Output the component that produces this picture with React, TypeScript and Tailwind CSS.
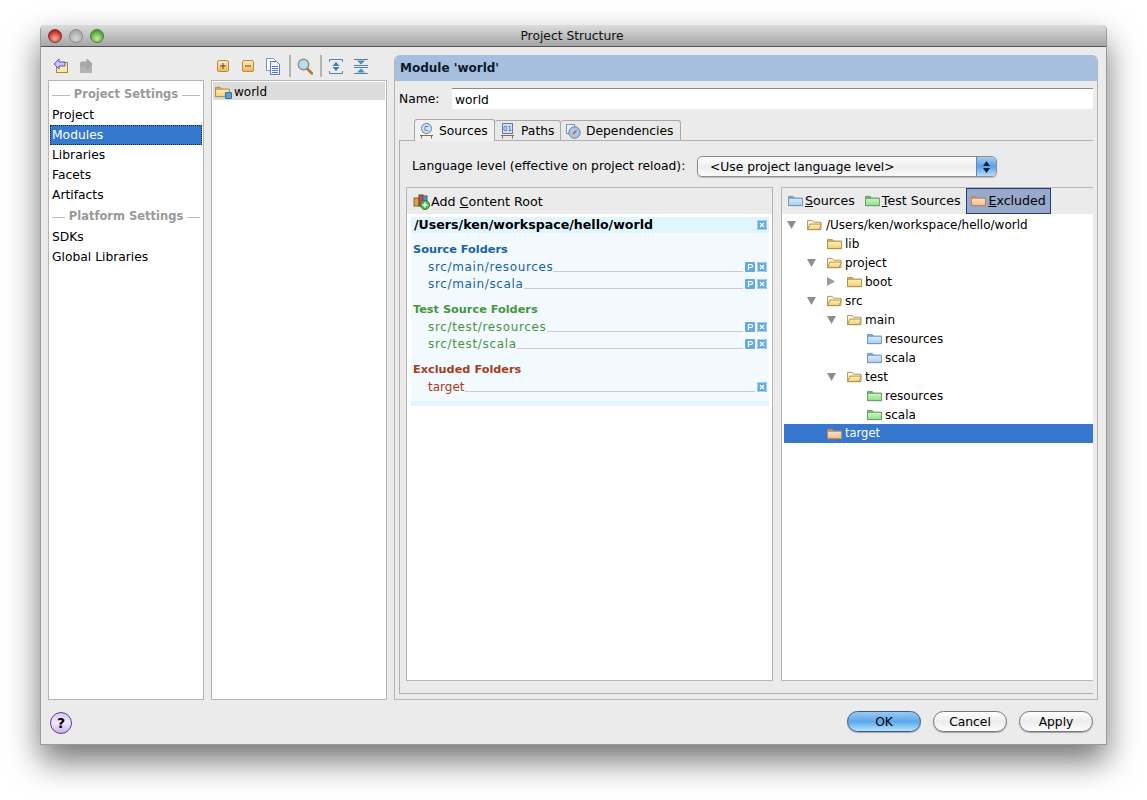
import React from "react";

const font = { sans: "font-['DejaVu_Sans',sans-serif]" };

const folderColors = {
  yellow: { tab: "#d9b65c", top: "#fdf0b8", bottom: "#f5cf6a", line: "#a98f4e" },
  blue: { tab: "#7fa9cf", top: "#d8ebfb", bottom: "#a9cdee", line: "#6f96bb" },
  green: { tab: "#6fb56f", top: "#cdf5c5", bottom: "#8fe08a", line: "#669c66" },
  orange: { tab: "#cf9a6d", top: "#fde3c8", bottom: "#f7b98a", line: "#b5865f" },
};

type FolderColor = keyof typeof folderColors;

const Folder = ({ color = "yellow", open = false }: { color?: FolderColor; open?: boolean }) => {
  const c = folderColors[color];
  const id = `f-${color}-${open ? "o" : "c"}`;
  return (
    <svg width="15" height="12" viewBox="0 0 16 13" className="shrink-0">
      <defs>
        <linearGradient id={id} x1="0" y1="0" x2="0" y2="1">
          <stop offset="0" stopColor={c.top} />
          <stop offset="1" stopColor={c.bottom} />
        </linearGradient>
      </defs>
      <path d="M.5 11.5V1.5h5l1.5 2h8v8z" fill={open ? "#fff7d8" : c.tab} stroke={c.line} />
      {open ? (
        <path d="M.5 11.5l2.5-6h12.5l-2.5 6z" fill={`url(#${id})`} stroke={c.line} />
      ) : (
        <rect x=".5" y="3.5" width="15" height="8" fill={`url(#${id})`} stroke={c.line} />
      )}
    </svg>
  );
};

const Light = ({ from, to, line }: { from: string; to: string; line: string }) => (
  <span
    className="w-[14px] h-[14px] rounded-full border"
    style={{ background: `radial-gradient(circle at 50% 70%, ${to}, ${from} 75%)`, borderColor: line }}
  />
);

const ToolbarIcons = () => (
  <div className="h-[28px] flex items-center pl-[5px]">
    <svg width="16" height="16" viewBox="0 0 16 16">
      <rect x="3.5" y="4.5" width="11" height="10" fill="#fbe9a6" stroke="#a88a44" />
      <path d="M1 6l5-5v3h6v4H6v3z" fill="#c9c5f5" stroke="#5a52c8" />
    </svg>
    <svg width="16" height="16" viewBox="0 0 16 16" className="ml-[9px]">
      <rect x="2" y="5" width="12" height="10" fill="#b3b3b3" />
      <path d="M14 6L9 1v3H3v4h6v3z" fill="#a8a8a8" stroke="#a0a0a0" />
    </svg>
  </div>
);

const SquareBtn = ({ plus }: { plus?: boolean }) => (
  <svg width="12" height="12" viewBox="0 0 12 12">
    <defs>
      <linearGradient id="sq" x1="0" y1="0" x2="0" y2="1">
        <stop offset="0" stopColor="#fdeec0" />
        <stop offset="1" stopColor="#f0b45c" />
      </linearGradient>
    </defs>
    <rect x=".5" y=".5" width="11" height="11" rx="1.5" fill="url(#sq)" stroke="#c08a3c" />
    <path d="M3 6h6" stroke="#5c4a20" />
    {plus && <path d="M6 3v6" stroke="#5c4a20" />}
  </svg>
);

const MiddleToolbar = () => (
  <div className="h-[28px] flex items-center pl-[6px]">
    <SquareBtn plus />
    <span className="ml-[13px] flex">
      <SquareBtn />
    </span>
    <svg width="15" height="17" viewBox="0 0 15 17" className="ml-[12px]">
      <path d="M.5.5h7l2 2v10h-9z" fill="#fff" stroke="#7f93c4" />
      <path d="M4.5 3.5h6l3 3v10h-9z" fill="#eef3ff" stroke="#5f78b4" />
      <path d="M6 8.5h6M6 10.5h6M6 12.5h6M6 14.5h6" stroke="#5f78b4" />
    </svg>
    <span className="w-[2px] h-[22px] bg-[#b4b4b4] ml-[8px]" />
    <svg width="16" height="17" viewBox="0 0 16 17" className="ml-[6px]">
      <path d="M10 10.5l5 5" stroke="#b07a30" strokeWidth="2.5" strokeLinecap="round" />
      <circle cx="6.5" cy="6.5" r="5.2" fill="#b8dcf4" stroke="#8f8f80" strokeWidth="1.4" />
    </svg>
    <span className="w-[2px] h-[22px] bg-[#b4b4b4] ml-[7px]" />
    <svg width="14" height="15" viewBox="0 0 14 15" className="ml-[7px]">
      <path d="M.5 3V.5h13V3M.5 12v2.500h13V12" fill="none" stroke="#5f7f9f" />
      <path d="M7 3l3.500 4h-7zM7 12L3.500 8h7z" fill="#3f7fb8" />
    </svg>
    <svg width="14" height="15" viewBox="0 0 14 15" className="ml-[11px]">
      <path d="M0 .5h14M0 6.500h14M0 8.500h14M0 14.500h14" fill="none" stroke="#5f7f9f" />
      <path d="M3 1.500h8L7 5.500zM3 13.500h8L7 9.500z" fill="#3f8fc8" />
    </svg>
  </div>
);

const SectionTitle = ({ children }: { children: React.ReactNode }) => (
  <div className="h-[22px] flex items-center gap-[4px] px-[3px] pt-[2px] text-[#999999] font-bold text-[11.5px]">
    <span className="flex-1 h-px bg-[#bdbdbd]" />
    <span>{children}</span>
    <span className="flex-1 h-px bg-[#bdbdbd]" />
  </div>
);

const NavItem = ({ label, active }: { label: string; active?: boolean }) => (
  <div
    className={
      active
        ? "h-[20px] mx-px flex items-center pl-px bg-[#3678cd] text-white border border-dotted border-[#0b2a55]"
        : "h-[20px] mx-px flex items-center pl-[2px] text-black"
    }
  >
    {label}
  </div>
);

const Sidebar = () => (
  <div className="w-[156px] flex flex-col shrink-0">
    <ToolbarIcons />
    <div className="flex-1 bg-white border border-[#b5b5b5] pt-[2px]">
      <SectionTitle>Project Settings</SectionTitle>
      <NavItem label="Project" />
      <NavItem label="Modules" active />
      <NavItem label="Libraries" />
      <NavItem label="Facets" />
      <NavItem label="Artifacts" />
      <SectionTitle>Platform Settings</SectionTitle>
      <NavItem label="SDKs" />
      <NavItem label="Global Libraries" />
    </div>
  </div>
);

const ModuleTree = () => (
  <div className="w-[176px] flex flex-col shrink-0 ml-[7px]">
    <MiddleToolbar />
    <div className="flex-1 bg-white border border-[#b5b5b5] pt-px px-px">
      <div className="h-[18px] bg-[#dcdcdc] flex items-center pl-[2px] gap-[3px] pt-px text-[12px]">
        <span className="relative flex">
          <Folder />
          <span className="absolute right-[-2px] bottom-[-1px] w-[7px] h-[7px] bg-[#5aa0d8] border border-[#2f6ea8] rounded-[1px]" />
        </span>
        <span className="ml-px">world</span>
      </div>
    </div>
  </div>
);

const TabIcon = ({ glyph }: { glyph: string }) => (
  <svg width="15" height="16" viewBox="0 0 15 16" className="shrink-0">
    <rect x="2.500" y=".5" width="10" height="10" rx={glyph === "C" ? 5 : 0} fill="#cfe0f5" stroke="#5d7fae" />
    <text x="7.500" y="8" fontSize="7" textAnchor="middle" fill="#335c8f">
      {glyph}
    </text>
    <path d="M1 12.500h13M2.500 12.500v3M12.500 12.500v3" stroke="#8a6a3e" fill="none" />
  </svg>
);

const Compass = () => (
  <svg width="15" height="15" viewBox="0 0 15 15" className="shrink-0">
    <rect x=".5" y=".5" width="8" height="9" fill="#eef3fb" stroke="#7e93b4" />
    <circle cx="8.500" cy="8.500" r="5.700" fill="#a9c8e8" stroke="#5d7fae" />
    <path d="M6 11l2-3.500L11 6 9.500 9z" fill="#d8533a" />
  </svg>
);

const Tabs = () => (
  <div className="flex h-[22px] ml-[15px] items-end">
    <div className="relative z-10 w-[81px] h-[22px] mb-[-1px] pt-px bg-[#f1f1f1] border border-b-0 border-[#a8a8a8] rounded-t-[3px] flex items-center pl-[4px] gap-[5px]">
      <TabIcon glyph="C" />
      <span>Sources</span>
    </div>
    <div className="w-[66px] h-[20px] pt-px bg-[#e9e9e9] border border-l-0 border-b-0 border-[#a8a8a8] rounded-t-[3px] flex items-center pl-[5px] gap-[6px]">
      <TabIcon glyph="01" />
      <span>Paths</span>
    </div>
    <div className="w-[120px] h-[20px] pt-px bg-[#e9e9e9] border border-l-0 border-b-0 border-[#a8a8a8] rounded-t-[3px] flex items-center pl-[5px] gap-[5px]">
      <Compass />
      <span>Dependencies</span>
    </div>
  </div>
);

const SelectBox = () => (
  <div className="w-[300px] h-[21px] rounded-[5px] border border-[#8e8e8e] flex overflow-hidden bg-gradient-to-b from-[#ffffff] via-[#eeeeee] to-[#fafafa] shadow-[0_1px_1px_rgba(0,0,0,0.2)]">
    <span className="flex-1 pl-[12px] leading-[20px]">&lt;Use project language level&gt;</span>
    <span className="w-[20px] flex flex-col items-center justify-center gap-[2px] bg-gradient-to-b from-[#a9cdf2] via-[#5f9fe6] to-[#b9dcf8] border-l border-[#5f86b4]">
      <svg width="7" height="5" viewBox="0 0 7 5">
        <path d="M3.500 0L7 5H0z" fill="#10233c" />
      </svg>
      <svg width="7" height="5" viewBox="0 0 7 5">
        <path d="M3.500 5L7 0H0z" fill="#10233c" />
      </svg>
    </span>
  </div>
);

const XBtn = () => (
  <svg width="10" height="10" viewBox="0 0 10 10" className="shrink-0">
    <rect width="10" height="10" rx="1" fill="#63a9e6" />
    <rect x=".5" y=".5" width="9" height="9" rx="1" fill="none" stroke="#a9d2f0" />
    <path d="M3 3l4 4M7 3l-4 4" stroke="#fff" strokeWidth="1.300" />
  </svg>
);

const PBtn = () => (
  <svg width="10" height="10" viewBox="0 0 10 10" className="shrink-0">
    <rect width="10" height="10" rx="1" fill="#63a9e6" />
    <path d="M3.500 8V2.500h2.500a1.400 1.400 0 0 1 0 3H3.500" fill="none" stroke="#fff" strokeWidth="1.200" />
  </svg>
);

const PathRow = ({ label, color, prop }: { label: string; color: string; prop?: boolean }) => (
  <div className="h-[17px] flex items-center pl-[17px] pr-[2px] text-[12px]" style={{ color }}>
    <span className={prop ? "tracking-[0.65px]" : ""}>{label}</span>
    <span className="flex-1 h-[10px] border-b border-[#c9cdd0] self-start mr-[2px] mt-[4px]" />
    {prop && <PBtn />}
    {prop && <span className="w-[2px]" />}
    <XBtn />
  </div>
);

const FolderGroup = ({ title, color, items, prop, mt }: { title: string; color: string; items: string[]; prop?: boolean; mt: string }) => (
  <div className={mt}>
    <div className="h-[17px] flex items-center pl-[2px] pt-[2px] font-bold text-[11.3px]" style={{ color }}>
      {title}
    </div>
    {items.map((item) => (
      <PathRow key={item} label={item} color={color} prop={prop} />
    ))}
  </div>
);

const ContentRoots = () => (
  <div className="w-[367px] bg-white border border-[#b5b5b5] flex flex-col shrink-0">
    <div className="h-[26px] bg-[#ebebeb] flex items-center pl-[6px] gap-[1px]">
      <svg width="17" height="17" viewBox="0 0 17 17" className="shrink-0">
        <rect x="1" y="5" width="5" height="8" fill="#d8a24a" stroke="#8a6a30" />
        <rect x="6" y="2" width="4" height="11" fill="#c8503c" stroke="#7a3a2c" />
        <rect x="10" y="3" width="4" height="9" fill="#5a8ec8" stroke="#3a5f8c" />
        <circle cx="12" cy="12" r="4.500" fill="#58b858" stroke="#2f7f2f" />
        <path d="M9.500 12h5M12 9.500v5" stroke="#fff" strokeWidth="1.400" />
      </svg>
      <span className="text-[12.7px] pt-px">
        Add <span className="underline">C</span>ontent Root
      </span>
    </div>
    <div className="ml-[4px] mr-[3px] mt-[3px] h-[189px] bg-[#f2faff] flex flex-col">
      <div className="h-[16px] bg-[#e1f5fe] flex items-center pl-[3px] pr-[2px] font-bold text-[12.6px] justify-between">
        <span className="pt-px">/Users/ken/workspace/hello/world</span>
        <XBtn />
      </div>
      <FolderGroup mt="mt-[8px]" title="Source Folders" color="#1a5fa8" items={["src/main/resources", "src/main/scala"]} prop />
      <FolderGroup mt="mt-[9px]" title="Test Source Folders" color="#4a9440" items={["src/test/resources", "src/test/scala"]} prop />
      <FolderGroup mt="mt-[9px]" title="Excluded Folders" color="#a83c20" items={["target"]} />
      <div className="flex-1" />
      <div className="h-[5px] bg-[#e1f5fe]" />
    </div>
  </div>
);

type Node = { label: string; depth: number; color?: FolderColor; arrow?: "down" | "right"; selected?: boolean };

const nodes: Node[] = [
  { label: "/Users/ken/workspace/hello/world", depth: 0, arrow: "down" },
  { label: "lib", depth: 1 },
  { label: "project", depth: 1, arrow: "down" },
  { label: "boot", depth: 2, arrow: "right" },
  { label: "src", depth: 1, arrow: "down" },
  { label: "main", depth: 2, arrow: "down" },
  { label: "resources", depth: 3, color: "blue" },
  { label: "scala", depth: 3, color: "blue" },
  { label: "test", depth: 2, arrow: "down" },
  { label: "resources", depth: 3, color: "green" },
  { label: "scala", depth: 3, color: "green" },
  { label: "target", depth: 1, color: "orange", selected: true },
];

const depthPad = ["pl-px", "pl-[21px]", "pl-[41px]", "pl-[61px]"];

const Arrow = ({ dir }: { dir?: "down" | "right" }) => (
  <span className="w-[12px] flex justify-center shrink-0">
    {dir === "down" && (
      <svg width="9" height="8" viewBox="0 0 9 8">
        <path d="M0 0h9L4.500 8z" fill="#8e8e8e" />
      </svg>
    )}
    {dir === "right" && (
      <svg width="8" height="9" viewBox="0 0 8 9">
        <path d="M0 0v9l8-4.500z" fill="#9c9c9c" />
      </svg>
    )}
  </span>
);

const TreeRow = ({ node }: { node: Node }) => (
  <div
    className={`h-[19px] flex items-center text-[12px] ${depthPad[node.depth]} ${
      node.selected ? "bg-[#3678cd] text-white" : "text-black"
    }`}
  >
    <Arrow dir={node.arrow} />
    <span className={node.depth === 0 ? "ml-[10px] mr-[4px] flex" : "ml-[10px] mr-[3px] flex"}>
      <Folder color={node.color ?? "yellow"} open={node.arrow === "down"} />
    </span>
    <span className={node.selected ? "text-[11.5px] pt-px" : ""}>{node.label}</span>
  </div>
);

const MarkButton = ({ color, first, rest, active }: { color: FolderColor; first: string; rest: string; active?: boolean }) => (
  <div
    className={
      active
        ? "h-[26px] ml-px flex items-center gap-[2px] px-[4px] bg-[#98a9cc] border border-[#1f3f7a]"
        : "h-[26px] flex items-center gap-[2px] px-[5px]"
    }
  >
    <Folder color={color} />
    <span className="pt-px text-[12.6px]">
      <span className="underline">{first}</span>
      {rest}
    </span>
  </div>
);

const SourceTree = () => (
  <div className="w-[312px] bg-white flex flex-col border-l border-b border-t border-[#b5b5b5] shrink-0 ml-[8px]">
    <div className="h-[26px] bg-[#ebebeb] flex items-center pl-px">
      <MarkButton color="blue" first="S" rest="ources" />
      <MarkButton color="green" first="T" rest="est Sources" />
      <MarkButton color="orange" first="E" rest="xcluded" active />
    </div>
    <div className="pl-[2px] pt-px">
      {nodes.map((n, i) => (
        <TreeRow key={i} node={n} />
      ))}
    </div>
  </div>
);

const ModulePanel = () => (
  <div className="flex-1 ml-[7px] mt-[3px] border-x border-b border-[#b5b5b5] rounded-t-[6px] flex flex-col overflow-hidden">
    <div className="h-[26px] bg-[#a6bfdf] flex items-center pl-[5px] font-bold text-[#0a1a2a] text-[12px]">
      Module 'world'
    </div>
    <div className="flex-1 flex flex-col pl-[4px] pr-[4px] pb-[5px]">
      <div className="h-[21px] mt-[7px] flex items-center">
        <span className="w-[53px] pt-[2px]">Name:</span>
        <div className="flex-1 h-[21px] bg-white border-t border-[#8c8c8c] pl-[3px] pt-[2px] flex items-center">world</div>
      </div>
      <div className="mt-[9px]">
        <Tabs />
      </div>
      <div className="flex-1 border-l border-t border-b border-[#b0b0b0] flex flex-col pl-[6px]">
        <div className="h-[21px] mt-[15px] flex items-center pl-[6px]">
          <span className="w-[285px]">Language level (effective on project reload):</span>
          <SelectBox />
        </div>
        <div className="flex h-[494px] mt-[10px]">
          <ContentRoots />
          <SourceTree />
        </div>
      </div>
    </div>
  </div>
);

const Pill = ({ label, primary }: { label: string; primary?: boolean }) => (
  <div
    className={
      primary
        ? "w-[74px] h-[21px] pt-px rounded-full border border-[#3a5a8c] flex items-center justify-center bg-gradient-to-b from-[#9cc9f0] via-[#5aa8ea] to-[#b5e2fb] shadow-[0_1px_1px_rgba(0,0,0,0.3)]"
        : "w-[74px] h-[21px] pt-px rounded-full border border-[#777777] flex items-center justify-center bg-gradient-to-b from-[#ffffff] via-[#ececec] to-[#fdfdfd] shadow-[0_1px_1px_rgba(0,0,0,0.3)]"
    }
  >
    {label}
  </div>
);

export default function App() {
  return (
    <div className={`${font.sans} w-[1147px] h-[800px] bg-white pt-[25px] pl-[40px] text-[12.3px] text-black overflow-hidden`}>
      <div className="w-[1067px] h-[720px] flex flex-col bg-[#ebebeb] border-x border-b border-[#9a9a9a] rounded-t-[5px] shadow-[0_16px_32px_rgba(0,0,0,0.55)]">
        <div className="relative h-[22px] shrink-0 rounded-t-[5px] bg-gradient-to-b from-[#dcdcdc] to-[#a6a6a6] border-b border-[#555555] flex items-center pl-[7px] gap-[7px]">
          <Light from="#b8201c" to="#ffb0a0" line="#8a3030" />
          <Light from="#a8a8a8" to="#d8d8d8" line="#8c8c8c" />
          <Light from="#4f9a30" to="#c0f0a0" line="#4a7a40" />
          <span className="absolute inset-x-0 text-center text-[#111111] pr-[3px] pt-[2px]">Project Structure</span>
        </div>
        <div className="flex-1 flex pl-[7px] pr-[8px] pt-[5px] min-h-0">
          <Sidebar />
          <ModuleTree />
          <ModulePanel />
        </div>
        <div className="h-[44px] shrink-0 flex items-center pl-[9px] pr-[13px]">
          <div className="w-[22px] h-[22px] mt-[2px] rounded-full border border-[#5a3f96] bg-gradient-to-b from-[#d8c8f0] via-[#f0e8ff] to-[#c8b0e8] flex items-center justify-center font-bold text-[14px]">
            ?
          </div>
          <div className="ml-auto flex gap-[12px] mb-px">
            <Pill label="OK" primary />
            <Pill label="Cancel" />
            <Pill label="Apply" />
          </div>
        </div>
      </div>
    </div>
  );
}
